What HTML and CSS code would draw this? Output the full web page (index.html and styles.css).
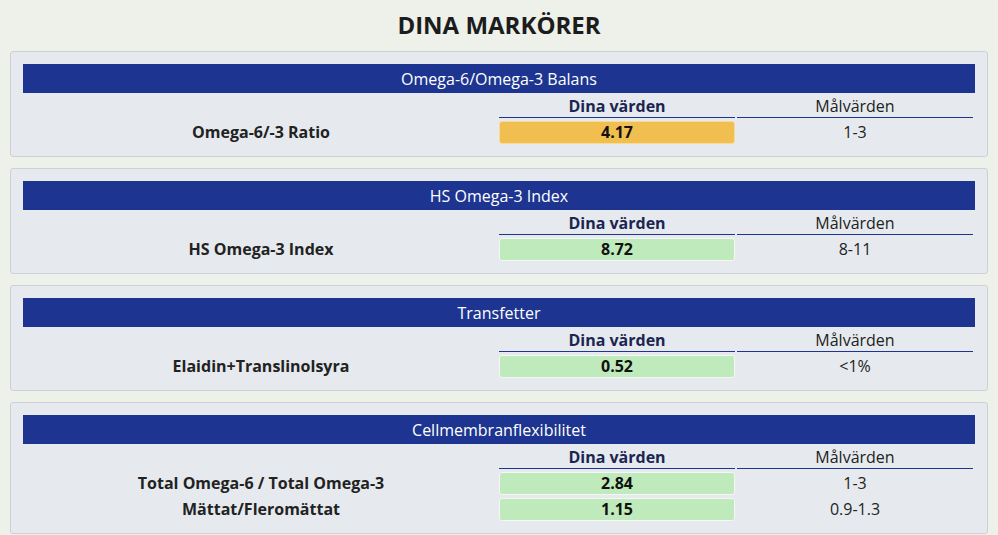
FILE: index.html
```html
<!DOCTYPE html>
<html lang="sv">
<head>
<meta charset="utf-8">
<title>Dina markörer</title>
<link rel="stylesheet" href="styles.css">
</head>
<body>
<div class="page">
  <h1 class="title">DINA MARKÖRER</h1>

  <section class="panel">
    <div class="panel-head">Omega-6/Omega-3 Balans</div>
    <div class="grid">
      <div class="cell"></div>
      <div class="cell th th-you">Dina värden</div>
      <div class="cell th">Målvärden</div>
      <div class="cell label">Omega-6/-3 Ratio</div>
      <div class="cell value warn">4.17</div>
      <div class="cell target">1-3</div>
    </div>
  </section>

  <section class="panel">
    <div class="panel-head">HS Omega-3 Index</div>
    <div class="grid">
      <div class="cell"></div>
      <div class="cell th th-you">Dina värden</div>
      <div class="cell th">Målvärden</div>
      <div class="cell label">HS Omega-3 Index</div>
      <div class="cell value ok">8.72</div>
      <div class="cell target">8-11</div>
    </div>
  </section>

  <section class="panel">
    <div class="panel-head">Transfetter</div>
    <div class="grid">
      <div class="cell"></div>
      <div class="cell th th-you">Dina värden</div>
      <div class="cell th">Målvärden</div>
      <div class="cell label">Elaidin+Translinolsyra</div>
      <div class="cell value ok">0.52</div>
      <div class="cell target">&lt;1%</div>
    </div>
  </section>

  <section class="panel">
    <div class="panel-head">Cellmembranflexibilitet</div>
    <div class="grid">
      <div class="cell"></div>
      <div class="cell th th-you">Dina värden</div>
      <div class="cell th">Målvärden</div>
      <div class="cell label">Total Omega-6 / Total Omega-3</div>
      <div class="cell value ok">2.84</div>
      <div class="cell target">1-3</div>
      <div class="cell label">Mättat/Fleromättat</div>
      <div class="cell value ok">1.15</div>
      <div class="cell target">0.9-1.3</div>
    </div>
  </section>
</div>
</body>
</html>
```
FILE: styles.css
```css
* { box-sizing: border-box; }

html, body {
  margin: 0;
  padding: 0;
  background: #eef0ea;
  font-family: "Open Sans", "DejaVu Sans", sans-serif;
  color: #222;
}

.page {
  padding: 0 10px;
}

.title {
  margin: 0;
  padding: 8px 0 10px;
  line-height: 33px;
  font-size: 24px;
  font-weight: 700;
  text-align: center;
  color: #1c1c1c;
}

.panel {
  background: #e6eaee;
  border: 1px solid #cdd1d4;
  border-radius: 3px;
  padding: 12px;
  margin-bottom: 11px;
}

.panel-head {
  height: 29px;
  padding-top: 2px;
  line-height: 27px;
  background: #1d3590;
  color: #fff;
  font-size: 16px;
  text-align: center;
}

.grid {
  display: grid;
  grid-template-columns: 2fr 1fr 1fr;
  column-gap: 2px;
  row-gap: 3px;
  padding: 2px 2px 0;
}

.cell {
  height: 23px;
  padding-top: 1px;
  line-height: 21px;
  font-size: 16px;
  text-align: center;
}

.th {
  height: 23px;
  padding-top: 1px;
  line-height: 21px;
  border-bottom: 1px solid #1d3590;
  color: #222;
}

.th-you {
  font-weight: 700;
  color: #1b2552;
}

.label {
  font-weight: 700;
  color: #222;
}

.value {
  padding-top: 0;
  font-weight: 700;
  color: #111;
  border: 1px solid #f4f7f2;
  border-radius: 3px;
}

.value.ok {
  background: #bfeabc;
}

.value.warn {
  background: #f1bf4f;
  border-color: #f6dc9a;
}

.target {
  color: #222;
}
```
